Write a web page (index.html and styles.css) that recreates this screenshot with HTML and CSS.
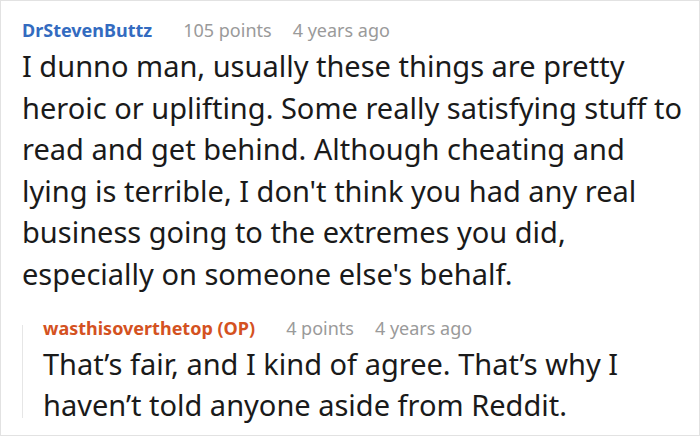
FILE: index.html
```html
<!DOCTYPE html>
<html lang="en">
<head>
<meta charset="utf-8">
<link rel="stylesheet" href="styles.css">
</head>
<body>
<div class="card">
  <div class="comment">
    <div class="meta">
      <span class="user user-blue">DrStevenButtz</span>
      <span class="points">105 points</span>
      <span class="time">4 years ago</span>
    </div>
    <p class="text">I dunno man, usually these things are pretty<br>heroic or uplifting. Some really satisfying stuff to<br>read and get behind. Although cheating and<br>lying is terrible, I don't think you had any real<br>business going to the extremes you did,<br>especially on someone else's behalf.</p>
  </div>
  <div class="reply">
    <div class="rail"></div>
    <div class="reply-body">
      <div class="meta">
        <span class="user user-orange">wasthisoverthetop (OP)</span>
        <span class="points">4 points</span>
        <span class="time">4 years ago</span>
      </div>
      <p class="text">That’s fair, and I kind of agree. That’s why I<br>haven’t told anyone aside from Reddit.</p>
    </div>
  </div>
</div>
</body>
</html>
```
FILE: styles.css
```css
* { box-sizing: border-box; }
html, body { margin: 0; padding: 0; background: #fff; }
.card {
  width: 700px;
  height: 436px;
  border: 1px solid #e2e2e2;
  padding: 17px 21px 0 21px;
  font-family: "Noto Sans", "Open Sans", sans-serif;
  color: #1a1a1a;
  overflow: hidden;
}
.meta {
  display: flex;
  align-items: baseline;
  font-size: 18px;
  line-height: 24px;
  white-space: nowrap;
}
.user { font-weight: 700; margin-right: 31px; }
.user-blue { color: #336bc0; }
.user-orange { color: #d4521f; }
.points { color: #9a9a9a; margin-right: 21px; }
.time { color: #9a9a9a; }
.text {
  margin: 3px 0 0 0;
  font-size: 29px;
  line-height: 41.6px;
  white-space: nowrap;
}
.reply {
  display: flex;
  margin-top: 21px;
}
.rail {
  width: 1px;
  background: #e6e6e6;
  margin: 9px 20px 8px 0;
  flex: none;
}
.reply-body { flex: 1; }
.reply-body .text { margin-top: 3px; }
```
